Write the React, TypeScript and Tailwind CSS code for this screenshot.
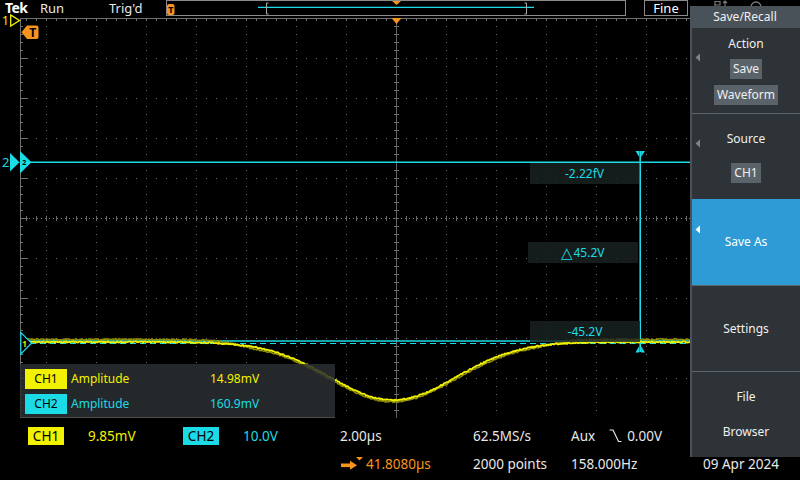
import React from "react";

const YEL = "#f2f200";
const CYA = "#1adbe6";
const ORG = "#f7941d";

function rnd(i: number) {
  const s = Math.sin(i * 12.9898 + 78.233) * 43758.5453;
  return s - Math.floor(s);
}

function buildWave() {
  const m: string[] = [];
  const s: string[] = [];
  for (let x = 21; x <= 690; x++) {
    const d = x - 393;
    const base = 342 + 58 * Math.exp(-0.5 * (d / 63) ** 2);
    const t = Math.min(1, Math.max(0, (Math.abs(d) - 140) / 40));
    m.push(`${x},${(base + (rnd(x) - 0.5) * 1.2).toFixed(2)}`);
    s.push(
      `${x},${(base + 1.8 * (1 - t) - 2.6 * t + (rnd(x + 500) - 0.5) * 1.4).toFixed(2)}`
    );
  }
  return { m: m.join(" "), s: s.join(" ") };
}

function Graticule() {
  const vLines = [46, 96, 146, 196, 246, 296, 346, 446, 496, 546, 596, 646];
  const hLines = [58, 98, 138, 178, 258, 298, 338, 378];
  let topTicks = "";
  for (let x = 26; x < 690; x += 10) topTicks += `M${x + 0.5},18 v3 `;
  let leftTicks = "";
  for (let y = 26; y < 418; y += 8) {
    const major = (y - 18) % 40 === 0;
    leftTicks += `M20,${y + 0.5} h${major ? 8 : 3} `;
  }
  let cTicks = "";
  for (let x = 26; x < 690; x += 10) cTicks += `M${x + 0.5},216 v5 `;
  for (let y = 26; y < 418; y += 8) cTicks += `M394,${y + 0.5} h5 `;
  const w = buildWave();
  return (
    <svg
      width={690}
      height={400}
      viewBox="0 18 690 400"
      className="absolute left-0 top-0 overflow-visible"
    >
      {vLines.map((x) => (
        <line key={"v" + x} x1={x + 0.5} y1={18} x2={x + 0.5} y2={418} stroke="#6a6a6a" strokeDasharray="1 7" />
      ))}
      {hLines.map((y) => (
        <line key={"h" + y} x1={26} y1={y + 0.5} x2={690} y2={y + 0.5} stroke="#6a6a6a" strokeDasharray="1 9" />
      ))}
      <line x1={396.5} y1={18} x2={396.5} y2={418} stroke="#646464" />
      <line x1={21} y1={218.5} x2={690} y2={218.5} stroke="#7a7a7a" strokeDasharray="1 3" />
      <path d={cTicks} stroke="#6a6a6a" />
      <line x1={20.5} y1={18} x2={20.5} y2={418} stroke="#707070" />
      <line x1={20} y1={18.5} x2={690} y2={18.5} stroke="#707070" />
      <path d={topTicks} stroke="#707070" />
      <path d={leftTicks} stroke="#707070" />
      {/* trigger position marker */}
      <polygon points="391.5,18 401.5,18 396.5,24" fill={ORG} />

      {/* cursors */}
      <line x1={20} y1={162.3} x2={690} y2={162.3} stroke={CYA} strokeWidth={1.5} />
      <line x1={20} y1={341} x2={690} y2={341} stroke={CYA} strokeWidth={1.3} />
      <line x1={20} y1={343.5} x2={690} y2={343.5} stroke={CYA} strokeWidth={1.2} strokeDasharray="6 4" />
      <line x1={640.2} y1={151} x2={640.2} y2={352} stroke={CYA} strokeWidth={1.6} />
      <polygon points="635.5,151 639.2,151 639.2,157" fill={CYA} />
      <polygon points="641.2,151 644.9,151 641.2,157" fill={CYA} />
      <polygon points="639.2,346 639.2,352.5 635.5,352.5" fill={CYA} />
      <polygon points="641.2,346 641.2,352.5 644.9,352.5" fill={CYA} />

      {/* waveform */}
      <polyline points={w.s} fill="none" stroke="#8d8d06" strokeWidth={1.6} />
      <polyline points={w.m} fill="none" stroke={YEL} strokeWidth={1.8} />

      {/* CH1 marker */}
      <text x={2} y={25} fontSize={12} fill={YEL} fontFamily="Noto Sans, sans-serif">1</text>
      <polygon points="10.7,15 10.7,26 19.5,20.5" fill="none" stroke={YEL} strokeWidth={1.3} />
      {/* Trigger level marker */}
      <path d="M21.5,32.3 L27,25.5 H36.5 Q38.5,25.5 38.5,27.5 V37 Q38.5,39 36.5,39 H27 Z" fill={ORG} />
      <text x={32.8} y={37.2} fontSize={12} fontWeight={700} fill="#000" textAnchor="middle" fontFamily="Noto Sans, sans-serif">T</text>

      {/* CH2 marker */}
      <text x={2} y={167} fontSize={13} fill={CYA} fontFamily="Noto Sans, sans-serif">2</text>
      <polygon points="10,153 10,171.5 19.5,162.3" fill={CYA} />
      <polygon points="20,151 20,173.5 31.5,162.3" fill={CYA} />
      <text x={22.3} y={165} fontSize={7} fontWeight={700} fill="#000" fontFamily="Noto Sans, sans-serif">2</text>

      {/* CH1 ground ref marker */}
      <polygon points="20.8,332.5 20.8,354 31.5,343.2" fill="#000" stroke={CYA} strokeWidth={1.2} />
      <text x={22.3} y={346.8} fontSize={8} fontWeight={700} fill={YEL} fontFamily="Noto Sans, sans-serif">1</text>
    </svg>
  );
}

function SideArrow({ top, white }: { top: string; white?: boolean }) {
  return (
    <svg className={`absolute left-[3px] ${top}`} width={6} height={9} viewBox="0 0 6 9">
      <polygon points="5,0.5 5,8.5 0.5,4.5" fill={white ? "#ffffff" : "#7d848b"} />
    </svg>
  );
}

export default function App() {
  return (
    <div className="relative w-[800px] h-[480px] overflow-hidden bg-black font-['Noto_Sans','DejaVu_Sans',sans-serif] text-[#e8e8e8]">
      <div className="flex flex-col">
        {/* top bar */}
        <div className="relative h-[18px] flex items-start text-[13px] leading-[16px]">
          <div className="w-[40px] pl-[5px] text-[14px] leading-[16px] font-bold text-white tracking-[-0.6px]">Tek</div>
          <div className="w-[69px]">Run</div>
          <div className="w-[57px]">Trig'd</div>
          <div className="w-[460px] h-[16px] border border-[#8a8a8a]">
            <svg width={458} height={14} viewBox="0 0 458 14" className="block">
              <line x1={91} y1={6.3} x2={367} y2={6.3} stroke={CYA} strokeWidth={1.3} />
              <path d="M101.5,2 h-2 v11 h2" fill="none" stroke="#a8a8a8" strokeWidth={1} />
              <path d="M357.5,2 h2 v11 h-2" fill="none" stroke="#a8a8a8" strokeWidth={1} />
              <rect x={0} y={3} width={7.5} height={11} rx={2} fill={ORG} />
              <text x={3.8} y={12.3} fontSize={9} fontWeight={700} fill="#000" textAnchor="middle" fontFamily="Noto Sans, sans-serif">T</text>
              <polygon points="225,0 234,0 229.5,4" fill={ORG} />
            </svg>
          </div>
          <div className="w-[18px]" />
          <div className="w-[44px] h-[16px] border border-[#8a8a8a] flex items-center justify-center text-[13px] text-white">Fine</div>
          <svg className="absolute left-[712px] top-0" width={56} height={8} viewBox="0 0 56 8">
            <path d="M3,7 V1.5 H8 V5 H3" fill="none" stroke="#737a80" strokeWidth={1.2} />
            <path d="M13,7 V1 M11,3 L13,1 L15,3" fill="none" stroke="#737a80" strokeWidth={1.2} />
            <circle cx={44} cy={7} r={5} fill="none" stroke="#737a80" strokeWidth={1.3} />
          </svg>
        </div>

        {/* graticule area */}
        <div className="relative h-[400px] w-[690px]">
          <Graticule />
          {/* cursor readouts */}
          <div className="absolute left-[530px] top-[145px] w-[109px] h-[21px] bg-[#1a2323]/80 flex items-center justify-center text-[12px] text-[#1adbe6]">
            -2.22fV
          </div>
          <div className="absolute left-[528px] top-[224px] w-[110px] h-[21px] bg-[#1a2323]/80 flex items-center justify-center text-[12px] text-[#1adbe6]">
            <span className="text-[15px] leading-[16px] font-['DejaVu_Sans',sans-serif] font-light">△</span>
            <span>45.2V</span>
          </div>
          <div className="absolute left-[530px] top-[303px] w-[110px] h-[21px] bg-[#1a2323]/80 flex items-center justify-center text-[12px] text-[#1adbe6]">
            -45.2V
          </div>
          {/* measurement box */}
          <div className="absolute left-[20px] top-[346px] w-[315px] h-[54px] bg-[#2a2f31]/85 border-b border-[#4c4c4c] flex flex-col gap-[5px] pt-[5px] pl-[5px] text-[12px] leading-[16px]">
            <div className="flex items-center h-[20px]">
              <div className="w-[42px] h-[20px] bg-[#f2f200] text-black flex items-center justify-center">CH1</div>
              <div className="ml-[4px] w-[139px] text-[#f2f200]">Amplitude</div>
              <div className="text-[#f2f200]">14.98mV</div>
            </div>
            <div className="flex items-center h-[20px]">
              <div className="w-[42px] h-[20px] bg-[#1adbe6] text-black flex items-center justify-center">CH2</div>
              <div className="ml-[4px] w-[139px] text-[#1adbe6]">Amplitude</div>
              <div className="text-[#1adbe6]">160.9mV</div>
            </div>
          </div>
        </div>

        {/* bottom readouts */}
        <div className="h-[62px] flex flex-col text-[13.5px] leading-[18px]">
          <div className="mt-[9px] h-[18px] flex items-center pl-[28px]">
            <div className="w-[60px]">
              <div className="w-[36px] h-[18px] bg-[#f2f200] text-black flex items-center justify-center">CH1</div>
            </div>
            <div className="w-[95px] text-[#f2f200]">9.85mV</div>
            <div className="w-[60px]">
              <div className="w-[36px] h-[18px] bg-[#1adbe6] text-black flex items-center justify-center">CH2</div>
            </div>
            <div className="w-[97px] text-[#1adbe6]">10.0V</div>
            <div className="w-[133px]">2.00µs</div>
            <div className="w-[98px]">62.5MS/s</div>
            <div className="flex items-center">
              <span>Aux</span>
              <svg className="ml-[14px] mr-[5px]" width={13} height={14} viewBox="0 0 13 14">
                <path d="M0.5,1 H4 L9.5,12.5 H12.5" fill="none" stroke="#e8e8e8" strokeWidth={1.2} />
              </svg>
              <span>0.00V</span>
            </div>
          </div>
          <div className="mt-[10px] h-[18px] flex items-center pl-[341px]">
            <svg className="w-[25px]" width={25} height={16} viewBox="0 0 25 16">
              <rect x={0} y={7.5} width={10} height={3.6} fill={ORG} />
              <polygon points="9,4.8 16,9.3 9,13.8" fill={ORG} />
              <polygon points="15,1 22,1 18.5,4.5" fill={ORG} />
            </svg>
            <div className="w-[107px] text-[#f7941d]">41.8080µs</div>
            <div className="w-[98px]">2000 points</div>
            <div className="w-[132px]">158.000Hz</div>
            <div>09 Apr 2024</div>
          </div>
        </div>
      </div>

      {/* side menu */}
      <div className="absolute right-0 top-[6px] w-[110px] flex flex-col text-[12px] leading-[16px] text-[#f0f0f0]">
        <div className="h-[22px] bg-[#4a5259] flex items-center justify-center">Save/Recall</div>
        <div className="flex flex-col bg-[#2e3337] border-l-2 border-[#4a5158]">
          <div className="relative h-[85px] flex flex-col items-center pt-[8px]">
            <SideArrow top="top-[25px]" />
            <div>Action</div>
            <div className="mt-[7px] h-[20px] px-[3px] bg-[#5b636a] flex items-center">Save</div>
            <div className="mt-[6px] h-[20px] px-[3px] bg-[#5b636a] flex items-center">Waveform</div>
          </div>
          <div className="relative h-[86px] border-t border-[#5c646b] flex flex-col items-center pt-[17px]">
            <SideArrow top="top-[25px]" />
            <div>Source</div>
            <div className="mt-[16px] h-[20px] px-[3px] bg-[#5b636a] flex items-center">CH1</div>
          </div>
          <div className="relative h-[86px] bg-[#2e9bd6] flex items-center justify-center text-white">
            <SideArrow top="top-[26px]" white />
            <div>Save As</div>
          </div>
          <div className="h-[86px] border-t border-[#5c646b] flex items-center justify-center">Settings</div>
          <div className="h-[86px] border-t border-[#5c646b] flex flex-col items-center justify-center gap-[19px]">
            <div>File</div>
            <div>Browser</div>
          </div>
        </div>
      </div>
    </div>
  );
}
